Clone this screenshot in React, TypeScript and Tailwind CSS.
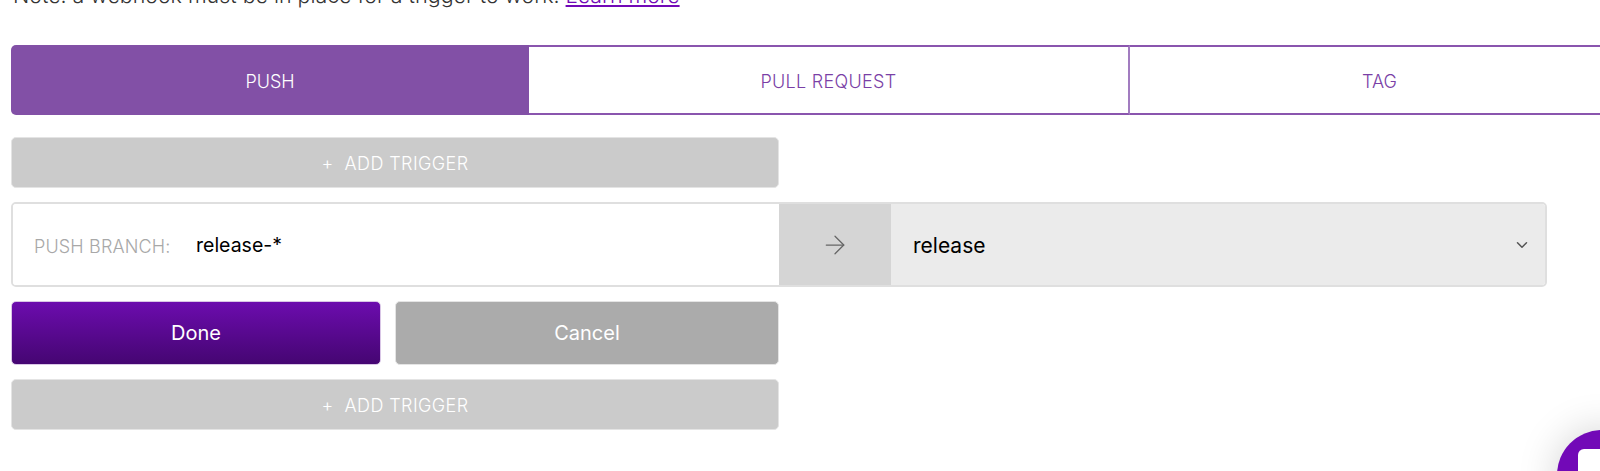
import { ArrowRight, ChevronDown } from 'lucide-react'

function AddTrigger() {
  return (
    <button className="flex h-[51px] w-[768px] items-center justify-center rounded-[5px] border border-[#e4e4e4] bg-[#cbcbcb] pt-[2px] text-[18px] font-light tracking-[0.4px] text-white">
      <span className="mr-[11px]">+</span>
      <span>ADD TRIGGER</span>
    </button>
  )
}

function TriggerTabs() {
  return (
    <div className="flex h-[70px] w-[1640px] pt-0 text-[18px] font-light text-[#7a3fa6]">
      <div className="flex w-[518px] items-center justify-center rounded-l-[5px] bg-[#8250a6] pt-[2px] text-white">PUSH</div>
      <div className="flex w-[601px] items-center justify-center border-y-2 border-r-2 border-y-[#8a55ae] border-r-[#a27cc0] bg-white pt-[2px] tracking-[0.3px]">
        PULL REQUEST
      </div>
      <div className="flex w-[521px] items-center justify-center border-y-2 border-y-[#8a55ae] bg-white pr-[22px] pt-[2px]">
        TAG
      </div>
    </div>
  )
}

function BranchRow() {
  return (
    <div className="flex h-[85px] w-[1536px] overflow-hidden rounded-[5px] border-2 border-[#dfdfdf] text-black">
      <div className="flex w-[766px] items-center bg-white pl-[21px] pt-[3px] text-[19.5px]">
        <span className="w-[162px] text-[18px] font-light tracking-[0.15px] text-[#a8a8a8]">PUSH BRANCH:</span>
        <span>release-*</span>
      </div>
      <div className="flex w-[112px] items-center justify-center bg-[#d5d5d5] text-[#666666]">
        <ArrowRight size={30} strokeWidth={1} />
      </div>
      <div className="flex flex-1 items-center justify-between bg-[#ebebeb] pl-[22px] pr-[14px] text-[21px]">
        <span className="pt-[3px]">release</span>
        <ChevronDown size={18} strokeWidth={2} className="text-[#555555]" />
      </div>
    </div>
  )
}

export default function App() {
  return (
    <div className="relative h-[471px] w-[1600px] overflow-hidden bg-white pl-[11px] font-['Inter','Lato',sans-serif]">
      <p className="-mt-[17px] mb-[38px] h-[24px] pl-[2px] text-[21.4px] font-light leading-[24px] text-[#333333]">
        Note: a webhook must be in place for a trigger to work.{' '}
        <a className="text-[#7209b7] underline">Learn more</a>
      </p>

      <TriggerTabs />

      <div className="mt-[22px] flex flex-col gap-[14px]">
        <AddTrigger />
        <BranchRow />
        <div className="flex gap-[14px] text-[20px] text-white">
          <button className="h-[64px] w-[370px] rounded-[5px] border border-[#d9c6e6] bg-gradient-to-b from-[#6c0cae] to-[#450672]">Done</button>
          <button className="h-[64px] w-[384px] rounded-[5px] border border-[#e4e4e4] bg-[#ababab]">Cancel</button>
        </div>
        <AddTrigger />
      </div>

      {/* chat launcher, cut off by the window corner */}
      <div className="absolute left-[1557px] top-[430px] h-[90px] w-[90px] rounded-full bg-[#7209b7] shadow-[0_0_40px_rgba(0,0,0,0.18)]">
        <div className="ml-[21px] mt-[19px] h-[40px] w-[40px] rounded-[6px] bg-white" />
      </div>
    </div>
  )
}
